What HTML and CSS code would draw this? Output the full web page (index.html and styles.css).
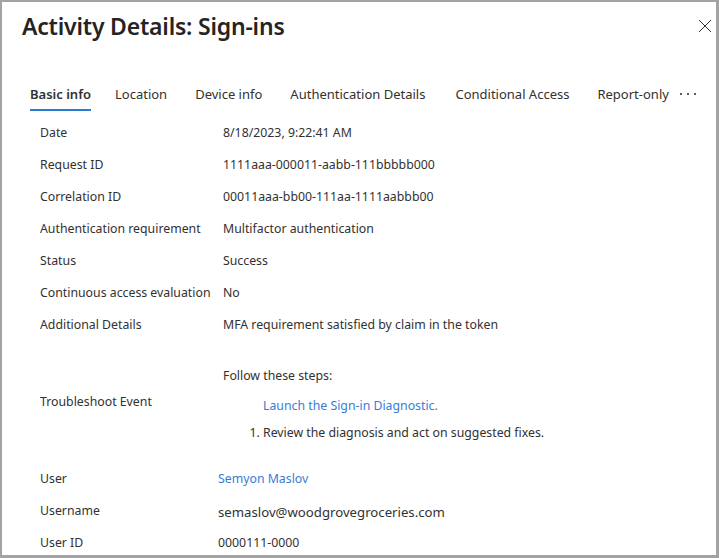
FILE: index.html
```html
<!DOCTYPE html>
<html lang="en">
<head>
<meta charset="utf-8">
<title>Activity Details: Sign-ins</title>
<link rel="stylesheet" href="styles.css">
</head>
<body>
<div class="panel">
  <header class="header">
    <h1 class="title">Activity Details: Sign-ins</h1>
    <button class="close" aria-label="Close">
      <svg width="14" height="14" viewBox="0 0 14 14"><path d="M1 1 L13 13 M13 1 L1 13" stroke="#323130" stroke-width="1" fill="none"/></svg>
    </button>
  </header>
  <nav class="tabs">
    <span class="tab active">Basic info</span>
    <span class="tab">Location</span>
    <span class="tab">Device info</span>
    <span class="tab wide">Authentication Details</span>
    <span class="tab">Conditional Access</span>
    <span class="tab">Report-only</span>
    <span class="more" aria-label="More">
      <svg width="16" height="4" viewBox="0 0 16 4"><rect x="0" y="1" width="2" height="2" fill="#605e5c"/><rect x="7" y="1" width="2" height="2" fill="#605e5c"/><rect x="14" y="1" width="2" height="2" fill="#605e5c"/></svg>
    </span>
  </nav>
  <div class="details">
    <div class="label">Date</div><div class="value">8/18/2023, 9:22:41 AM</div>
    <div class="label">Request ID</div><div class="value">1111aaa-000011-aabb-111bbbbb000</div>
    <div class="label">Correlation ID</div><div class="value">00011aaa-bb00-111aa-1111aabbb00</div>
    <div class="label">Authentication requirement</div><div class="value">Multifactor authentication</div>
    <div class="label">Status</div><div class="value">Success</div>
    <div class="label">Continuous access evaluation</div><div class="value">No</div>
    <div class="label">Additional Details</div><div class="value">MFA requirement satisfied by claim in the token</div>
    <div class="label trouble-label">Troubleshoot Event</div>
    <div class="value trouble">
      <div class="steps-intro">Follow these steps:</div>
      <a class="link diag" href="#">Launch the Sign-in Diagnostic.</a>
      <ol class="steps"><li>Review the diagnosis and act on suggested fixes.</li></ol>
    </div>
  </div>
  <div class="details user">
    <div class="label">User</div><div class="value"><a class="link" href="#">Semyon Maslov</a></div>
    <div class="label">Username</div><div class="value big">semaslov@woodgrovegroceries.com</div>
    <div class="label">User ID</div><div class="value">0000111-0000</div>
  </div>
</div>
</body>
</html>
```

FILE: styles.css
```css
* { box-sizing: border-box; }
html, body { margin: 0; padding: 0; background: #ffffff; }
body {
  font-family: "Noto Sans", "Open Sans", "Liberation Sans", sans-serif;
  color: #323130;
}
.panel {
  width: 719px;
  height: 558px;
  border-style: solid;
  border-color: #a3a3a3;
  border-width: 2px 3px 3px 2px;
  overflow: hidden;
  padding: 0 0 0 20px;
}
.header {
  display: flex;
  justify-content: space-between;
  align-items: flex-start;
  height: 76px;
}
.title {
  margin: 8px 0 0 0;
  font-size: 23px;
  font-weight: 600;
  line-height: 32px;
  color: #252423;
  letter-spacing: -0.2px;
}
.close {
  border: 0;
  background: none;
  padding: 0;
  margin: 17px 4px 0 0;
  width: 14px;
  height: 14px;
  display: flex;
}
.tabs {
  display: flex;
  align-items: center;
  height: 32px;
  padding-left: 8px;
  font-size: 13px;
}
.tab {
  position: relative;
  margin-right: 28px;
  line-height: 32px;
  white-space: nowrap;
}
.tab.wide { margin-right: 30px; }
.tab.active { font-weight: 600; margin-right: 24px; }
.tab.active::after {
  content: "";
  position: absolute;
  left: 0;
  right: 0;
  bottom: -1px;
  height: 2px;
  background: #2b79d0;
}
.more { display: flex; align-items: center; margin-left: -17px; }
.details {
  display: grid;
  grid-template-columns: 183px 1fr;
  padding-left: 18px;
  margin-top: 6px;
  font-size: 12.3px;
}
.label, .value {
  height: 32px;
  display: flex;
  align-items: center;
  white-space: nowrap;
}
.trouble-label { height: 122px; }
.trouble {
  height: 122px;
  display: block;
  padding-top: 26px;
}
.steps-intro { line-height: 20px; }
.diag {
  display: block;
  margin: 10px 0 0 40px;
  line-height: 20px;
}
.steps {
  margin: 7px 0 0 0;
  padding-left: 40px;
  line-height: 20px;
}
.link { color: #3a7bd5; text-decoration: none; }
.details.user {
  grid-template-columns: 178px 1fr;
  margin-top: 0;
}
.value.big { font-size: 13.2px; padding-top: 4px; }
```
